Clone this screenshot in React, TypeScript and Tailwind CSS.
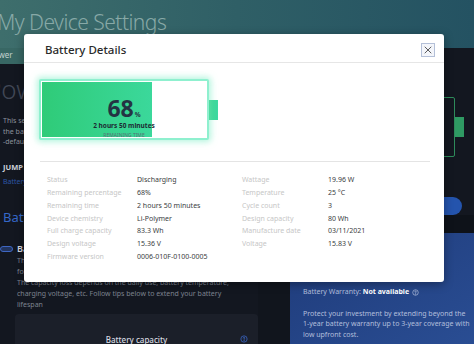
import { X } from 'lucide-react'

const leftRows = [
  ['Status', 'Discharging'],
  ['Remaining percentage', '68%'],
  ['Remaining time', '2 hours 50 minutes'],
  ['Device chemistry', 'Li-Polymer'],
  ['Full charge capacity', '83.3 Wh'],
  ['Design voltage', '15.36 V'],
  ['Firmware version', '0006-010F-0100-0005'],
]

const rightRows = [
  ['Wattage', '19.96 W'],
  ['Temperature', '25 °C'],
  ['Cycle count', '3'],
  ['Design capacity', '80 Wh'],
  ['Manufacture date', '03/11/2021'],
  ['Voltage', '15.83 V'],
]

function InfoIcon({ className }: { className?: string }) {
  return (
    <svg viewBox="0 0 16 16" className={className} fill="none" stroke="currentColor" strokeWidth="1.4">
      <circle cx="8" cy="8" r="6.3" />
      <path d="M6.3 6.3c0-1 .8-1.7 1.7-1.7s1.7.7 1.7 1.6c0 1.2-1.6 1.3-1.6 2.6" strokeLinecap="round" />
      <circle cx="8.1" cy="11.4" r=".5" fill="currentColor" />
    </svg>
  )
}

function BatteryGauge() {
  return (
    <div className="flex items-center">
      <div className="relative w-[170px] h-[61px] border-2 border-[#8ff0cf] rounded-[2px] p-px bg-white shadow-[0_0_6px_2px_rgba(120,236,195,0.55)]">
        <div className="h-full w-[110px] bg-linear-to-r from-[#2fcb78] to-[#3bd89b]" />
        <div className="absolute inset-0 flex flex-col items-center pt-[16px]">
          <div className="flex items-baseline text-[#243443] font-bold leading-none">
            <span className="text-[23px]">68</span>
            <span className="text-[6.5px] ml-px">%</span>
          </div>
          <div className="mt-[3px] text-[6.5px] font-bold text-[#1d2a33] leading-none">2 hours 50 minutes</div>
          <div className="mt-[3px] text-[5px] text-[#557075] leading-none">REMAINING TIME</div>
        </div>
      </div>
      <div className="w-[10px] h-[20px] -ml-px bg-linear-to-r from-[#36cf86] to-[#3ddaa2]" />
    </div>
  )
}

function BatteryDetails() {
  return (
    <div className="absolute left-[24px] top-[34px] w-[420px] h-[248px] bg-white rounded-[3px] shadow-[0_2px_10px_rgba(0,0,0,0.35)]">
      <div className="h-[29px] pt-[3px] pl-[21px] pr-[9px] flex items-center justify-between border-b border-[#e6e6e6]">
        <div className="text-[11.5px] text-[#2a2a2a] font-medium">Battery Details</div>
        <button className="w-[14px] h-[14px] flex items-center justify-center border border-[#b4c0d8] bg-[#f3f5fa]">
          <X size={12} strokeWidth={1.6} className="text-[#333]" />
        </button>
      </div>
      <div className="pl-[15px] pt-[16px]">
        <BatteryGauge />
      </div>
      <div className="ml-[16px] mr-[14px] mt-[21px] border-t-[1.5px] border-[#e4e4e4]" />
      <div className="ml-[23px] mt-[12px] grid grid-cols-[90px_105px_86px_1fr] auto-rows-[12.8px] items-center text-[7px]">
        {leftRows.map(([label, value], i) => (
          <div key={label} className="contents">
            <div className="text-[#c6c6c6]">{label}</div>
            <div className="text-[#3a3d42]">{value}</div>
            <div className="text-[#c6c6c6]">{rightRows[i]?.[0] ?? ''}</div>
            <div className="text-[#3a3d42]">{rightRows[i]?.[1] ?? ''}</div>
          </div>
        ))}
      </div>
    </div>
  )
}

export default function App() {
  return (
    <div className="relative w-[474px] h-[344px] overflow-hidden bg-[#131720] font-['Noto_Sans','Liberation_Sans',sans-serif]">
      <header className="h-[48px] bg-linear-to-r from-[#3e6e6c] via-[#2f5f66] to-[#245262] pt-[12px]">
        <div className="-ml-[3px] text-[21px] font-light text-[#88a9a7] leading-none tracking-tight">My Device Settings</div>
      </header>
      <nav className="h-[16px] flex">
        <div className="w-[60px] bg-[#386764] -ml-[11px] text-[8px] text-[#c2d2d0] leading-[14px]">Power</div>
      </nav>

      <main className="flex">
        <section className="w-[258px] pl-[3px]">
          <div className="-ml-[17px] mt-[12px] text-[26px] font-light text-[#414756] leading-none">Power</div>
          <div className="mt-[14px] text-[7px] leading-[10.5px] text-[#8c929c]">
            This section lets you change the power settings of your device and
            <br />
            the battery charging behaviour. Click Restore to reset to factory
            <br />
            -default settings.
          </div>
          <div className="mt-[14px] text-[7.5px] font-bold text-[#cfd3da]">JUMP TO</div>
          <div className="mt-[4px] text-[7px] text-[#2c56a6]">Battery Settings</div>
          <div className="mt-[21px] text-[13px] text-[#3568c9]">Battery Settings</div>
          <div className="mt-[14px] -ml-[3px] flex items-center gap-[4px]">
            <div className="w-[13px] h-[6px] rounded-[3px] border border-[#3e66c2] bg-[#22345d]" />
            <div className="text-[9px] font-semibold text-[#d7dbe2]">Battery Gauge Reset</div>
          </div>
          <div className="ml-[14px] text-[7px] leading-[11px] text-[#7d838f]">
            The battery gauge reset will calibrate the battery capacity value
            <br />
            for a more accurate reading of the remaining charge and time.
            <br />
            The capacity loss depends on the daily use, battery temperature,
            <br />
            charging voltage, etc. Follow tips below to extend your battery
            <br />
            lifespan
          </div>
          <div className="ml-[12px] mt-[4px] h-[40px] rounded-[4px] bg-[#1b1f29] pt-[20px] flex justify-center relative">
            <span className="text-[8px] text-[#d7dae0] font-medium">Battery capacity</span>
            <InfoIcon className="absolute right-[10px] top-[21px] w-[8px] h-[8px] text-[#3f6fd6]" />
          </div>
        </section>

        <div className="w-[32px] bg-[#11151d]" />

        <section className="flex-1 flex flex-col">
          <div className="pt-[33px] pr-[10px] flex items-center justify-end">
            <div className="w-[150px] h-[60px] border-[1.5px] border-[#2e8b5b] rounded-[2px]" />
            <div className="w-[9px] h-[20px] bg-[#2f9a63]" />
          </div>
          <div className="mt-[40px] pr-[12px] flex justify-end">
            <div className="w-[120px] h-[18px] rounded-full bg-[#2454ad]" />
          </div>
          <div className="h-[18px] bg-[#0e1219]" />
          <div className="flex-1 h-[111px] bg-linear-to-br from-[#1f3b7a] to-[#2a4e94] pl-[13px] pt-[54px] text-[7px] text-[#b2bfdc]">
            <div className="flex items-center gap-[3px]">
              <span>
                Battery Warranty: <span className="font-bold text-white">Not available</span>
              </span>
              <InfoIcon className="w-[7px] h-[7px] text-[#c5d0ea]" />
            </div>
            <div className="mt-[11px] leading-[10.5px]">
              Protect your investment by extending beyond the
              <br />
              1-year battery warranty up to 3-year coverage with
              <br />
              low upfront cost.
            </div>
          </div>
        </section>
      </main>

      <BatteryDetails />
    </div>
  )
}
